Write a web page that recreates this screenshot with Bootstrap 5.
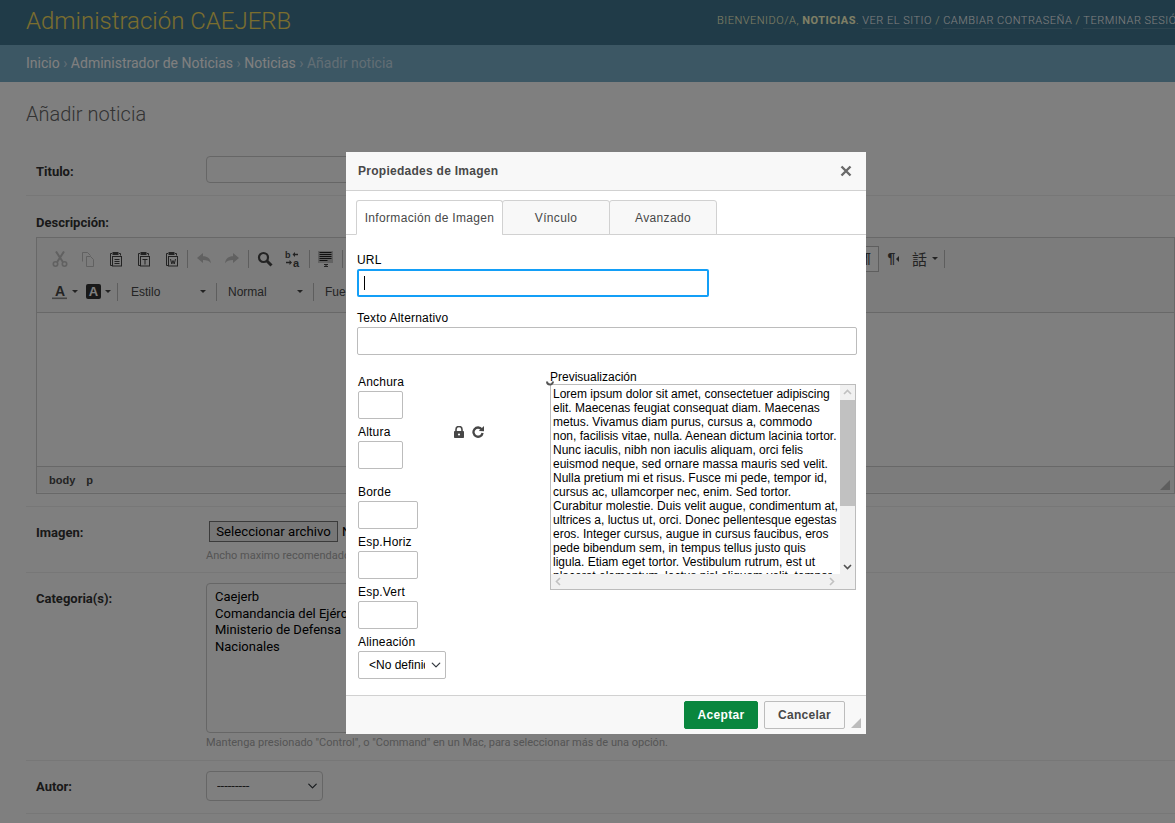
<!DOCTYPE html>
<html lang="es">
<head>
  <meta charset="UTF-8">
  <meta name="viewport" content="width=device-width, initial-scale=1">
  <title>Añadir noticia | Administración CAEJERB</title>
  <link href="https://cdn.jsdelivr.net/npm/bootstrap@5.3.0/dist/css/bootstrap.min.css" rel="stylesheet">
  <style>
    html, body { height: 100%; overflow: hidden; }
    body { font-family: Roboto, "Liberation Sans", sans-serif; font-size: 14px; color: #333; background: #fff; }

    /* django admin page */
    .adm-header { height: 45px; padding: 0 0 0 26px; background: #417690; white-space: nowrap; overflow: hidden; }
    .adm-brand { flex: 0 0 691px; font-size: 24px; font-weight: 300; color: #f5dd5d; line-height: 42px; }
    .adm-tools { flex: 0 0 auto; font-size: 11px; font-weight: 300; letter-spacing: .5px; text-transform: uppercase; color: #ffc; line-height: 42px; }
    .adm-tools strong { font-weight: 700; }
    .adm-tools a { color: #fff; text-decoration: none; border-bottom: 1px solid rgba(255,255,255,.15); padding-bottom: 1px; }
    .adm-crumbs { height: 37px; padding: 0 26px; background: #79aec8; color: #c4dce8; font-size: 14px; line-height: 36px; white-space: nowrap; }
    .adm-crumbs a { color: #fff; text-decoration: none; }
    .adm-crumbs i { font-style: normal; }
    .adm-title { margin: 0; padding: 20px 0 0 26px; height: 65px; font-size: 20px; font-weight: 300; color: #666; line-height: 24px; }
    .adm-row { margin: 0 0 0 26px; padding-left: 10px; border-bottom: 1px solid #eee; }
    .adm-label { flex: 0 0 170px; font-size: 13px; font-weight: 700; color: #333; line-height: 16px; }
    .adm-input { width: 400px; height: 27px; margin-top: -3px; border: 1px solid #ccc; border-radius: 4px; background: #fff; }
    .adm-help { font-size: 11px; color: #aaa; line-height: 14px; white-space: nowrap; }
    .adm-file { gap: 4px; font-size: 13.3px; color: #000; }
    .adm-filebtn { height: 21px; width: 129px; padding: 0; margin-left: 3px; border: 1px solid #767676; border-radius: 0; background: #efefef; font-size: 13.2px; line-height: 18px; color: #000; }
    .adm-list { width: 400px; height: 150px; padding: 5px 8px; border: 1px solid #ccc; border-radius: 4px; background: #fff; font-size: 13px; line-height: 16.5px; color: #000; }
    .adm-list option { padding: 0; min-height: 16.5px; }
    .adm-select { width: 117px; height: 30px; margin-top: -2px; padding: 0 20px 0 10px; border: 1px solid #ccc; border-radius: 4px; background-color: #fff; background-position: right 3px center; background-size: 13px 10px; font-size: 13px; color: #333; }
    #rowTitulo { height: 49px; }
    #rowTitulo .adm-label { padding-top: 2px; }
    #rowDesc { height: 311px; padding-top: 19px; }
    #rowImagen { height: 66px; padding-top: 14px; }
    #rowImagen .adm-label { padding-top: 4px; }
    #rowImagen .adm-help { margin-top: 7px; }
    #rowCat { height: 188px; padding-top: 10px; }
    #rowCat .adm-label { padding-top: 8px; }
    #rowCat .adm-help { margin-top: 3px; }
    #rowAutor { height: 53px; }

    /* rich text editor behind the dialog */
    .ed-box { width: 1139px; height: 257px; margin-top: 6px; border: 1px solid #d1d1d1; background: #fff; }
    .ed-bar { height: 75px; padding: 4px 0 0 9px; background: #f8f8f8; border-bottom: 1px solid #d1d1d1; }
    .ed-line { height: 33px; }
    .ed-btn { flex: 0 0 28px; height: 28px; }
    .ed-btn svg { display: block; }
    .ed-off { opacity: .3; }
    .ed-sep { flex: 0 0 1px; height: 18px; margin: 0 2px 0 2px; background: #bcbcbc; }
    .ed-sep-a { margin-left: 1px; }
    .ed-sep-b { margin-left: 0; }
    .ed-sep-c { margin: 0; }
    .ed-arrow { flex: 0 0 auto; width: 0; height: 0; border: 3px solid transparent; border-top-color: #474747; border-bottom-width: 0; }
    .ed-arrow-l { border-top-color: transparent; border-right-color: #474747; border-bottom-width: 3px; border-left-width: 0; }
    .ed-combo { font-family: "Liberation Sans", sans-serif; font-size: 12px; color: #484848; }
    .ed-drop { flex: 0 0 96px; padding: 0 10px 0 11px; }
    .ed-more { padding-left: 11px; }
    .ed-gap { flex: 0 0 514px; }
    .ed-on { flex: 0 0 20px; height: 26px; padding-left: 3px; border: 1px solid #bcbcbc; background: #fff; font-family: "Liberation Sans", sans-serif; font-weight: 700; font-size: 14px; color: #474747; }
    .ed-glyph { padding-left: 1px; gap: 1px; font-family: "Liberation Sans", sans-serif; font-weight: 700; font-size: 14px; color: #474747; }
    .ed-langbtn { flex: 0 0 35px; padding-left: 5px; gap: 5px; }
    .ed-lang { font-family: "Noto Sans CJK TC", sans-serif; font-size: 15px; line-height: 16px; color: #474747; }
    .ed-color { flex: 0 0 34px; gap: 4px; padding-left: 4px; }
    .ed-bgcolor { flex: 0 0 37px; padding-left: 6px; gap: 4px; }
    .ed-body { height: 153px; }
    .ed-foot { height: 26px; padding: 1px 0 0 12px; gap: 11px; background: #f8f8f8; border-top: 1px solid #d1d1d1; font-family: "Liberation Sans", sans-serif; font-size: 11px; font-weight: 700; color: #484848; }
    .ed-grip { position: absolute; right: 4px; bottom: 3px; }

    /* image properties dialog */
    .dlg { position: absolute; left: 346px; top: 152px; z-index: 1060; width: 520px; height: 582px; background: #fff; font-family: "Liberation Sans", sans-serif; font-size: 12px; color: #000; }
    .dlg-head { height: 39px; padding: 0 14px 0 12px; background: #f8f8f8; border-bottom: 1px solid #d1d1d1; }
    .dlg-title { font-size: 12px; font-weight: 700; letter-spacing: .27px; color: #484848; }
    .dlg-tabs { height: 44px; padding: 9px 0 0 10px; border-bottom: 1px solid #d1d1d1; }
    .dlg-tabs .nav-link { height: 35px; padding: 0; margin: 0 -1px 0 0; border: 1px solid #d1d1d1; border-radius: 3px 3px 0 0; background: #f8f8f8; color: #484848; font-size: 12px; letter-spacing: .33px; line-height: 34px; text-align: center; }
    .dlg-tabs .nav-link.active { background: #fff; border-color: #d1d1d1 #d1d1d1 #fff; color: #484848; }
    .tab-a { width: 147px; }
    .tab-b, .tab-c { width: 108px; }
    .dlg-body { height: 460px; padding: 17px 9px 0 11px; }
    .dlg-label { display: block; height: 14px; margin: 0 0 3px; line-height: 16px; letter-spacing: .2px; }
    .dlg-input { display: block; height: 28px; min-height: 0; padding: 0 6px; border: 1px solid #bcbcbc; border-radius: 2px; background: #fff; font-size: 12px; }
    .dlg-url { width: 352px; border: 2px solid #139ff7; position: relative; }
    .dlg-caret { position: absolute; left: 5px; top: 5px; width: 1px; height: 14px; background: #000; }
    .dlg-gap { margin-top: 13px; }
    .dlg-w-a { width: 45px; }
    .dlg-w-b { width: 60px; }
    .dlg-w-c { width: 500px; }
    .dlg-left { flex: 0 0 193px; padding: 19px 0 0 1px; }
    .dlg-next { margin-top: 5px; }
    .dlg-after { margin-top: 15px; }
    .dlg-dims { flex: 0 0 95px; }
    .dlg-lock { margin-bottom: 31px; height: 12px; gap: 7px; }
    .dlg-select { width: 88px; height: 28px; min-height: 0; padding: 0 20px 0 10px; border: 1px solid #bcbcbc; border-radius: 2px; background-position: right 3px center; background-size: 12px 10px; font-family: "Liberation Sans", sans-serif; font-size: 12px; color: #000; }
    .dlg-right { flex: 0 0 306px; padding-top: 15px; position: relative; }
    .dlg-spin { position: absolute; left: -4px; top: 25px; }
    .prev-cap { height: 14px; line-height: 14px; }
    .prev-box { width: 306px; height: 206px; border: 1px solid #bcbcbc; }
    .prev-main { height: 189px; }
    .prev-text { flex: 0 0 289px; height: 189px; padding: 2px 0 0 2px; overflow: hidden; font-size: 12px; line-height: 14px; white-space: nowrap; }
    .prev-vbar { flex: 0 0 15px; height: 189px; background: #f1f1f1; position: relative; }
    .prev-thumb { position: absolute; left: 0; right: 0; top: 15px; height: 106px; background: #c1c1c1; }
    .prev-hbar { height: 15px; padding: 0 4px; background: #f1f1f1; }
    .sb-up, .sb-down { position: absolute; left: 3px; }
    .sb-up { top: 4px; }
    .sb-down { bottom: 4px; }
    .dlg-foot { height: 39px; padding: 5px 21px 0 0; background: #f8f8f8; border-top: 1px solid #d1d1d1; position: relative; }
    .dlg-btn { height: 28px; padding: 0; border-radius: 2px; font-size: 12px; font-weight: 700; letter-spacing: .3px; line-height: 26px; }
    .dlg-ok { width: 74px; margin-right: 6px; background: #09863e; border: 1px solid #09863e; color: #fff; }
    .dlg-no { width: 81px; background: #f8f8f8; border: 1px solid #bcbcbc; color: #484848; }
    .dlg-grip { position: absolute; right: 5px; bottom: 6px; }
  </style>
</head>
<body>

<!-- Header -->
<header class="adm-header d-flex">
  <div class="adm-brand">Administración CAEJERB</div>
  <div class="adm-tools">Bienvenido/a, <strong>Noticias</strong>. <a href="#">Ver el sitio</a> / <a href="#">Cambiar contraseña</a> / <a href="#">Terminar sesión</a></div>
</header>
<div class="adm-crumbs"><a href="#">Inicio</a> <i>›</i> <a href="#">Administrador de Noticias</a> <i>›</i> <a href="#">Noticias</a> <i>›</i> Añadir noticia</div>

<h1 class="adm-title">Añadir noticia</h1>

<!-- Form -->
<form>
  <div class="adm-row d-flex align-items-center" id="rowTitulo">
    <label class="adm-label">Titulo:</label>
    <div class="adm-input"></div>
  </div>

  <div class="adm-row" id="rowDesc">
    <label class="adm-label d-block">Descripción:</label>
    <div class="ed-box position-relative">
      <div class="ed-bar">
        <div class="ed-line d-flex align-items-center">
          <span class="ed-btn d-flex align-items-center justify-content-center ed-off"><svg width="16" height="16" viewBox="0 0 16 16" fill="none" stroke="#474747"><circle cx="3.5" cy="13" r="2.2" stroke-width="1.6"/><circle cx="12.5" cy="13" r="2.2" stroke-width="1.6"/><path d="M5 11.2 12 .5M11 11.2 4 .5" stroke-width="2"/></svg></span>
          <span class="ed-btn d-flex align-items-center justify-content-center ed-off"><svg width="16" height="16" viewBox="0 0 16 16" fill="none" stroke="#474747" stroke-width="1"><path d="M2.5 10.5v-9h5l3 3M6.5 5.5h4l3 3v7h-7z"/></svg></span>
          <span class="ed-btn d-flex align-items-center justify-content-center"><svg width="16" height="16" viewBox="0 0 16 16" fill="none" stroke="#474747" stroke-width="1"><path d="M4 2.500H2.500v12H4M11 2.500h1.500v2"/><rect x="4.500" y="1" width="6" height="3" fill="#474747" stroke="none"/><rect x="4.500" y="5.500" width="9" height="9.500"/><path d="M6.500 8.500h5M6.500 10.500h5M6.500 12.500h5"/></svg></span>
          <span class="ed-btn d-flex align-items-center justify-content-center"><svg width="16" height="16" viewBox="0 0 16 16" fill="none" stroke="#474747" stroke-width="1"><path d="M4 2.500H2.500v12H4M11 2.500h1.500v2"/><rect x="4.500" y="1" width="6" height="3" fill="#474747" stroke="none"/><rect x="4.500" y="5.500" width="9" height="9.500"/><path d="M6.500 8.500h5M9 8.500v5"/></svg></span>
          <span class="ed-btn d-flex align-items-center justify-content-center"><svg width="16" height="16" viewBox="0 0 16 16" fill="none" stroke="#474747" stroke-width="1"><path d="M4 2.500H2.500v12H4M11 2.500h1.500v2"/><rect x="4.500" y="1" width="6" height="3" fill="#474747" stroke="none"/><rect x="4.500" y="5.500" width="9" height="9.500"/><path d="M6.500 8 7.800 13l1.200-3.500 1.200 3.500 1.300-5"/></svg></span>
          <span class="ed-sep ed-sep-a"></span>
          <span class="ed-btn d-flex align-items-center justify-content-center ed-off"><svg width="16" height="16" viewBox="0 0 16 16" fill="#474747"><path d="M1 7 7 2v3.200c4.500 0 7.500 2.500 8 7-1.700-2.500-4-3.300-8-3.300V12z"/></svg></span>
          <span class="ed-btn d-flex align-items-center justify-content-center ed-off"><svg width="16" height="16" viewBox="0 0 16 16" fill="#474747"><path d="M15 7 9 2v3.200c-4.500 0-7.500 2.500-8 7 1.700-2.500 4-3.300 8-3.300V12z"/></svg></span>
          <span class="ed-sep"></span>
          <span class="ed-btn d-flex align-items-center justify-content-center"><svg width="16" height="16" viewBox="0 0 16 16" fill="none" stroke="#474747"><circle cx="6.500" cy="6.500" r="4.500" stroke-width="2.200"/><path d="m10 10 4.500 4.500" stroke-width="3"/></svg></span>
          <span class="ed-btn d-flex align-items-center justify-content-center"><svg width="16" height="16" viewBox="0 0 16 16" fill="#474747"><text x="0" y="7" font-family="Liberation Sans" font-weight="700" font-size="9">b</text><text x="8" y="15.500" font-family="Liberation Sans" font-weight="700" font-size="11">a</text><path d="M7.500 3.500 10 1v1.800h3v1.400h-3V6zM7 11.500 4.500 9v1.800H1v1.400h3.500V14z"/></svg></span>
          <span class="ed-sep"></span>
          <span class="ed-btn d-flex align-items-center justify-content-center"><svg width="16" height="16" viewBox="0 0 16 16"><rect width="15" height="12" fill="#c4c4c4"/><path d="M1.500 1.500h12M1.500 3.500h12M1.500 5.500h12M1.500 7.500h12M1.500 9.500h8" stroke="#222" stroke-width="1"/><path d="M6 13.500h4M8 13.500v2M6 15.500h4" stroke="#474747" stroke-width="1"/></svg></span>
          <span class="ed-sep"></span>
          <span class="ed-gap"></span>
          <span class="ed-on d-flex align-items-center">¶</span>
          <span class="ed-btn d-flex align-items-center justify-content-center ed-glyph">¶<span class="ed-arrow ed-arrow-l"></span></span>
          <span class="ed-langbtn d-flex align-items-center"><span class="ed-lang">話</span><span class="ed-arrow"></span></span>
          <span class="ed-sep"></span>
        </div>
        <div class="ed-line d-flex align-items-center">
          <span class="ed-color d-flex align-items-center justify-content-center"><svg width="16" height="16" viewBox="0 0 16 16"><text x="8" y="12" text-anchor="middle" font-family="Liberation Sans" font-weight="700" font-size="14" fill="#474747">A</text><rect x="0" y="13.500" width="15" height="1.600" fill="#8a8a8a"/></svg><span class="ed-arrow"></span></span>
          <span class="ed-bgcolor d-flex align-items-center"><svg width="15" height="15" viewBox="0 0 15 15"><rect width="15" height="15" rx="2" fill="#333"/><text x="7.500" y="12" text-anchor="middle" font-family="Liberation Sans" font-weight="700" font-size="13" fill="#fff">A</text></svg><span class="ed-arrow"></span></span>
          <span class="ed-sep ed-sep-b"></span>
          <span class="ed-combo ed-drop d-flex align-items-center justify-content-between">Estilo<span class="ed-arrow"></span></span>
          <span class="ed-sep ed-sep-c"></span>
          <span class="ed-combo ed-drop d-flex align-items-center justify-content-between">Normal<span class="ed-arrow"></span></span>
          <span class="ed-sep ed-sep-c"></span>
          <span class="ed-combo ed-more">Fuente</span>
        </div>
      </div>
      <div class="ed-body"></div>
      <div class="ed-foot d-flex align-items-center">
        <span>body</span><span>p</span>
      </div>
      <svg class="ed-grip" width="10" height="10" viewBox="0 0 10 10"><path d="M10 0v10H0z" fill="#bcbcbc"/></svg>
    </div>
  </div>

  <div class="adm-row d-flex" id="rowImagen">
    <label class="adm-label">Imagen:</label>
    <div>
      <div class="adm-file d-flex align-items-center"><button type="button" class="adm-filebtn">Seleccionar archivo</button><span>Ningún archivo seleccionado</span></div>
      <div class="adm-help">Ancho maximo recomendado</div>
    </div>
  </div>

  <div class="adm-row d-flex" id="rowCat">
    <label class="adm-label">Categoria(s):</label>
    <div>
      <select multiple class="adm-list d-block">
        <option>Caejerb</option>
        <option>Comandancia del Ejército</option>
        <option>Ministerio de Defensa</option>
        <option>Nacionales</option>
      </select>
      <div class="adm-help">Mantenga presionado "Control", o "Command" en un Mac, para seleccionar más de una opción.</div>
    </div>
  </div>

  <div class="adm-row d-flex align-items-center" id="rowAutor">
    <label class="adm-label">Autor:</label>
    <select class="form-select adm-select"><option>---------</option></select>
  </div>
</form>

<!-- Backdrop -->
<div class="modal-backdrop show"></div>

<!-- Dialog -->
<div class="dlg d-flex flex-column">
  <div class="dlg-head d-flex align-items-center justify-content-between">
    <span class="dlg-title">Propiedades de Imagen</span>
    <svg width="12" height="12" viewBox="0 0 12 12" stroke="#6a6a6a" stroke-width="2.400"><path d="M1.500 1.500l9 9M10.500 1.500l-9 9"/></svg>
  </div>

  <ul class="nav nav-tabs dlg-tabs">
    <li class="nav-item"><a class="nav-link active tab-a" href="#">Información de Imagen</a></li>
    <li class="nav-item"><a class="nav-link tab-b" href="#">Vínculo</a></li>
    <li class="nav-item"><a class="nav-link tab-c" href="#">Avanzado</a></li>
  </ul>

  <div class="dlg-body">
    <label class="dlg-label">URL</label>
    <div class="dlg-input dlg-url"><span class="dlg-caret"></span></div>
    <label class="dlg-label dlg-gap">Texto Alternativo</label>
    <input type="text" class="form-control dlg-input dlg-w-c">

    <div class="d-flex">
      <div class="dlg-left">
        <div class="d-flex">
          <div class="dlg-dims">
            <label class="dlg-label">Anchura</label>
            <input type="text" class="form-control dlg-input dlg-w-a">
            <label class="dlg-label dlg-next">Altura</label>
            <input type="text" class="form-control dlg-input dlg-w-a">
          </div>
          <div class="dlg-lock d-flex align-self-end">
            <svg width="12" height="12" viewBox="0 0 12 12"><path d="M3 5.500V3.500a3 3 0 0 1 6 0v2" fill="none" stroke="#474747" stroke-width="1.600"/><rect x="1" y="5" width="10" height="7" rx=".8" fill="#474747"/><circle cx="6" cy="8.500" r="1.100" fill="#fff"/></svg>
            <svg width="12" height="12" viewBox="0 0 12 12"><path d="M9.800 3.400A4.600 4.600 0 1 0 10.600 7" fill="none" stroke="#474747" stroke-width="2.300"/><path d="M6.800 5 12 5.200V0z" fill="#474747"/></svg>
          </div>
        </div>
        <label class="dlg-label dlg-after">Borde</label>
        <input type="text" class="form-control dlg-input dlg-w-b">
        <label class="dlg-label dlg-next">Esp.Horiz</label>
        <input type="text" class="form-control dlg-input dlg-w-b">
        <label class="dlg-label dlg-next">Esp.Vert</label>
        <input type="text" class="form-control dlg-input dlg-w-b">
        <label class="dlg-label dlg-next">Alineación</label>
        <select class="form-select dlg-select"><option>&lt;No definido&gt;</option></select>
      </div>

      <div class="dlg-right">
        <div class="prev-cap">Previsualización</div>
        <svg class="dlg-spin" width="8" height="7" viewBox="0 0 8 7"><path d="M1 1.500a3 3 0 0 0 6 0" fill="none" stroke="#555" stroke-width="2"/></svg>
        <div class="prev-box">
          <div class="prev-main d-flex">
            <div class="prev-text">Lorem ipsum dolor sit amet, consectetuer adipiscing<br>elit. Maecenas feugiat consequat diam. Maecenas<br>metus. Vivamus diam purus, cursus a, commodo<br>non, facilisis vitae, nulla. Aenean dictum lacinia tortor.<br>Nunc iaculis, nibh non iaculis aliquam, orci felis<br>euismod neque, sed ornare massa mauris sed velit.<br>Nulla pretium mi et risus. Fusce mi pede, tempor id,<br>cursus ac, ullamcorper nec, enim. Sed tortor.<br>Curabitur molestie. Duis velit augue, condimentum at,<br>ultrices a, luctus ut, orci. Donec pellentesque egestas<br>eros. Integer cursus, augue in cursus faucibus, eros<br>pede bibendum sem, in tempus tellus justo quis<br>ligula. Etiam eget tortor. Vestibulum rutrum, est ut<br>placerat elementum, lectus nisl aliquam velit, tempor</div>
            <div class="prev-vbar">
              <svg class="sb-up" width="9" height="6" viewBox="0 0 9 6"><path d="M1 5l3.500-3.500L8 5" fill="none" stroke="#c1c1c1" stroke-width="1.600"/></svg>
              <div class="prev-thumb"></div>
              <svg class="sb-down" width="9" height="6" viewBox="0 0 9 6"><path d="M1 1l3.500 3.500L8 1" fill="none" stroke="#505050" stroke-width="1.600"/></svg>
            </div>
          </div>
          <div class="prev-hbar d-flex align-items-center justify-content-between">
            <svg width="6" height="9" viewBox="0 0 6 9"><path d="M5 1 1.500 4.500 5 8" fill="none" stroke="#c1c1c1" stroke-width="1.600"/></svg>
            <svg class="me-3" width="6" height="9" viewBox="0 0 6 9"><path d="M1 1l3.500 3.500L1 8" fill="none" stroke="#c1c1c1" stroke-width="1.600"/></svg>
          </div>
        </div>
      </div>
    </div>
  </div>

  <div class="dlg-foot d-flex justify-content-end">
    <button type="button" class="btn dlg-btn dlg-ok">Aceptar</button>
    <button type="button" class="btn dlg-btn dlg-no">Cancelar</button>
    <svg class="dlg-grip" width="10" height="10" viewBox="0 0 10 10"><path d="M10 0v10H0z" fill="#bcbcbc"/></svg>
  </div>
</div>

<script src="https://cdn.jsdelivr.net/npm/bootstrap@5.3.0/dist/js/bootstrap.bundle.min.js"></script>
</body>
</html>
